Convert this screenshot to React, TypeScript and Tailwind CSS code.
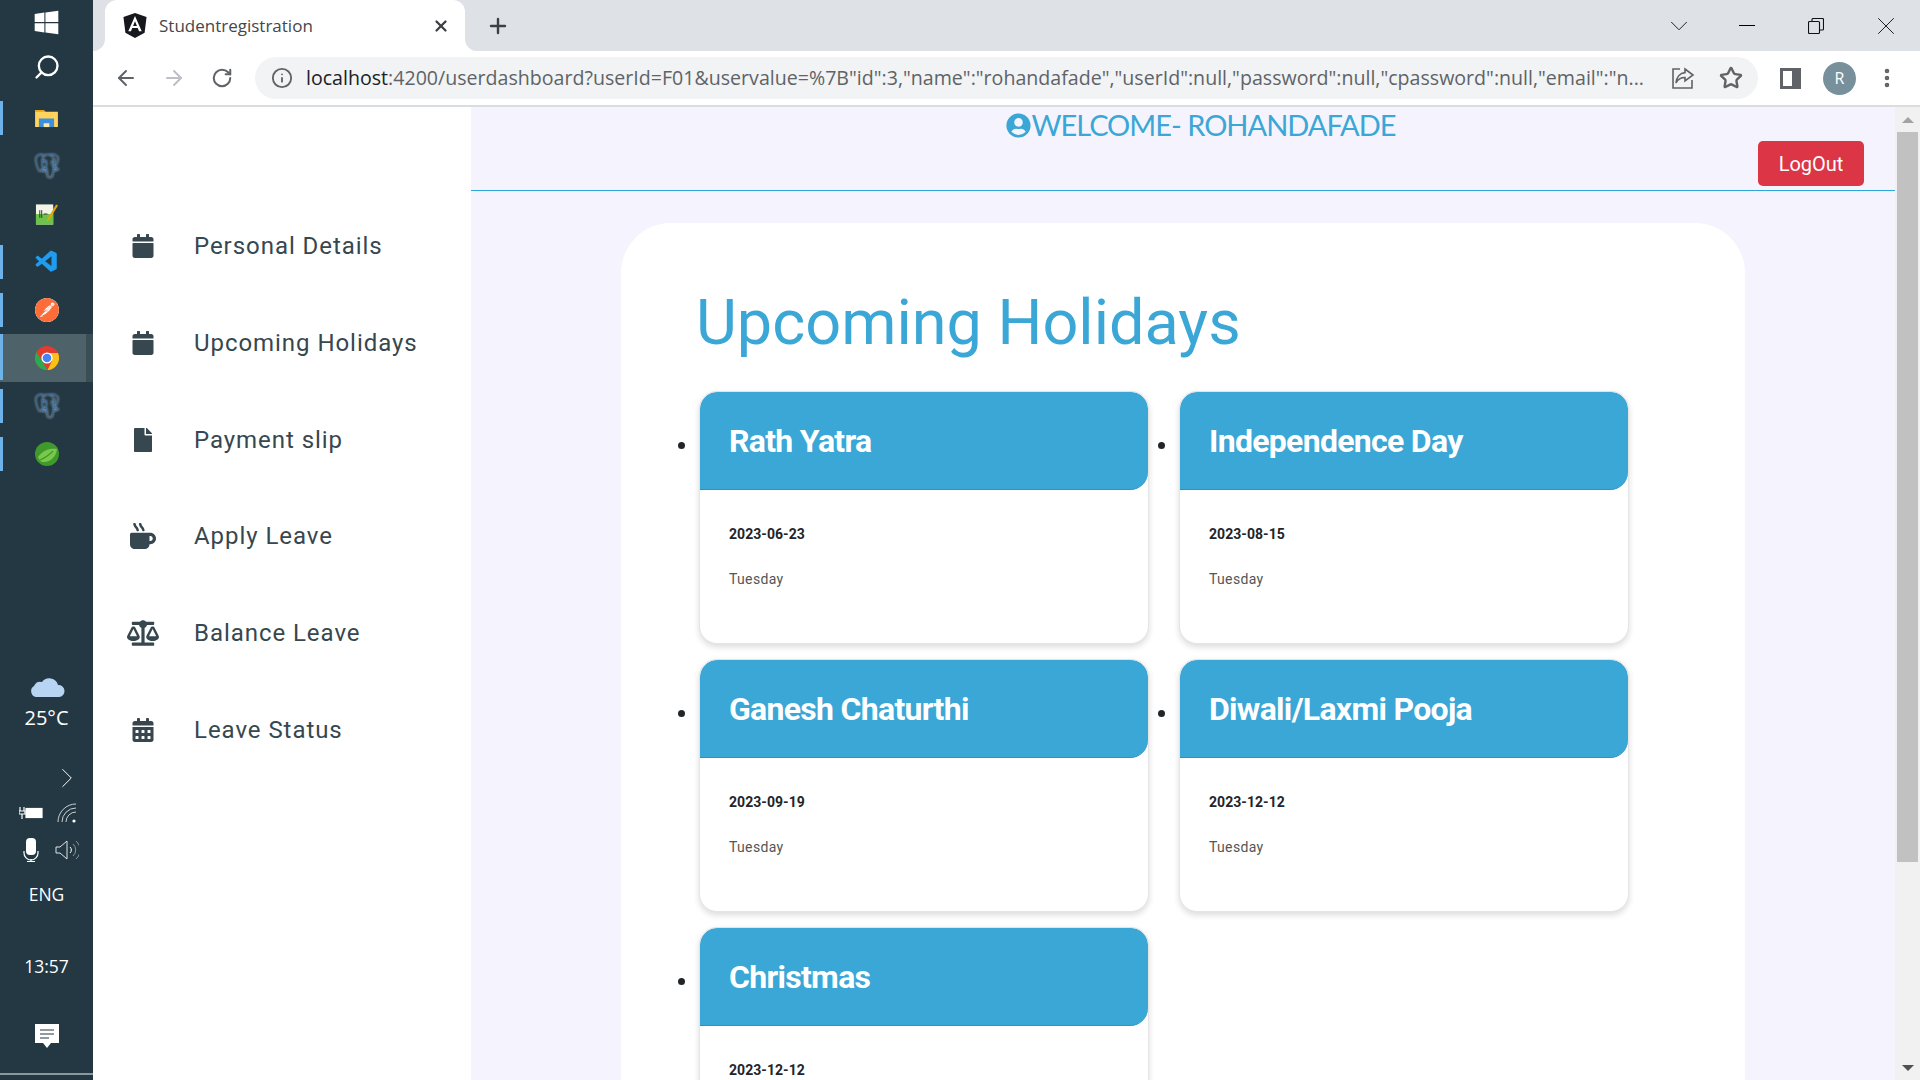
import React from 'react';
import { FaBalanceScale, FaCalendar, FaCalendarAlt, FaFile, FaMugHot, FaUserCircle, FaWindows } from 'react-icons/fa';
import { SiPostgresql, SiPostman } from 'react-icons/si';
import { VscVscode } from 'react-icons/vsc';
import { ArrowLeft, ArrowRight, ChevronDown, ChevronRight, Info, MoreVertical, Plus, RotateCw, Search, Star, X } from 'lucide-react';

const holidays = [
    { name: 'Rath Yatra', date: '2023-06-23', day: 'Tuesday' },
    { name: 'Independence Day', date: '2023-08-15', day: 'Tuesday' },
    { name: 'Ganesh Chaturthi', date: '2023-09-19', day: 'Tuesday' },
    { name: 'Diwali/Laxmi Pooja', date: '2023-12-12', day: 'Tuesday' },
    { name: 'Christmas', date: '2023-12-12', day: 'Tuesday' },
];

const menu = [
    { label: 'Personal Details', icon: <FaCalendar className="w-[24px] h-[24px]" /> },
    { label: 'Upcoming Holidays', icon: <FaCalendar className="w-[24px] h-[24px]" /> },
    { label: 'Payment slip', icon: <FaFile className="w-[24px] h-[24px]" /> },
    { label: 'Apply Leave', icon: <FaMugHot className="w-[26px] h-[26px]" /> },
    { label: 'Balance Leave', icon: <FaBalanceScale className="w-[32px] h-[32px]" /> },
    { label: 'Leave Status', icon: <FaCalendarAlt className="w-[24px] h-[24px]" /> },
];

function ChromeLogo() {
    return (
        <svg viewBox="0 0 24 24" className="w-[24px] h-[24px]">
            <circle cx="12" cy="12" r="12" fill="#e33b2e" />
            <path d="M1.6 6 L7 15 L12.5 24 A12 12 0 0 1 1.6 6Z" fill="#2da94f" />
            <path d="M12 7 H23 A12 12 0 0 1 12.5 24 L17 15 Z" fill="#fbc116" />
            <circle cx="12" cy="12" r="5.6" fill="#fff" />
            <circle cx="12" cy="12" r="4.3" fill="#4285f4" />
        </svg>
    );
}

function FolderIcon() {
    return (
        <svg viewBox="0 0 24 20" className="w-[23px] h-[19px]">
            <path d="M0 1 H9 L11 3 H24 V19 H0Z" fill="#ffd35c" />
            <path d="M0 1 H9 L11 3 H0Z" fill="#e8a317" />
            <rect x="4" y="10" width="16" height="9" fill="#3b8fdc" />
            <rect x="9" y="15" width="6" height="4" fill="#ffe9a8" />
        </svg>
    );
}

function NotepadIcon() {
    return (
        <svg viewBox="0 0 24 24" className="w-[23px] h-[24px]">
            <rect x="1" y="2" width="18" height="21" fill="#f2f4e8" />
            <rect x="1" y="12" width="18" height="11" fill="#6cc24a" />
            <path d="M5 8 V16 M7 8 V16 M9 12 H13" stroke="#333" strokeWidth="1" />
            <path d="M22 2 L13 17 L12 20 L15 18 L24 3Z" fill="#e5a50a" />
        </svg>
    );
}

function SpringLogo() {
    return (
        <svg viewBox="0 0 24 24" className="w-[24px] h-[24px]">
            <circle cx="12" cy="12" r="12" fill="#3f9a2b" />
            <path d="M3 15 C8 8 15 6 22 7 C21 15 15 21 7 20 C5 19 4 17 3 15Z" fill="#79c84b" />
            <path d="M5 18 C10 16 14 13 18 9" stroke="#3f9a2b" strokeWidth="1.2" fill="none" />
        </svg>
    );
}

function PgIcon() {
    return <SiPostgresql className="w-[24px] h-[24px] text-[#33679a] drop-shadow-[0_0_1px_#e4eef6]" />;
}

function TaskbarApp({ children, bar, active }: { children: React.ReactNode; bar?: boolean; active?: boolean }) {
    return (
        <div className={`relative h-[48px] flex items-center justify-center ${active ? 'bg-[#4e6269] border-r-[7px] border-[#3c4e55] pl-[7px]' : ''}`}>
            {bar && <div className={`absolute left-0 w-[3px] bg-[#6db3ea] ${active ? 'top-0 h-[46px]' : 'top-[7px] h-[34px]'}`} />}
            {children}
        </div>
    );
}

function Taskbar() {
    return (
        <aside className="w-[93px] h-full shrink-0 bg-[#233843] flex flex-col text-white font-['Open_Sans',sans-serif]">
            <div className="h-[44px] flex items-center justify-center">
                <FaWindows className="w-[27px] h-[27px]" />
            </div>
            <div className="h-[45px] flex items-center justify-center">
                <Search className="w-[28px] h-[28px] -scale-x-100" strokeWidth={2} />
            </div>
            <div className="mt-[5px]">
                <TaskbarApp bar><FolderIcon /></TaskbarApp>
                <TaskbarApp><PgIcon /></TaskbarApp>
                <TaskbarApp><NotepadIcon /></TaskbarApp>
                <TaskbarApp bar><VscVscode className="w-[26px] h-[26px] text-[#1f9cf0]" /></TaskbarApp>
                <TaskbarApp bar><SiPostman className="w-[24px] h-[24px] text-[#ff6c37] bg-white rounded-full" /></TaskbarApp>
                <TaskbarApp bar active><ChromeLogo /></TaskbarApp>
                <TaskbarApp bar><PgIcon /></TaskbarApp>
                <TaskbarApp bar><SpringLogo /></TaskbarApp>
            </div>
            <div className="mt-[196px] flex flex-col items-center">
                <svg viewBox="0 0 36 24" className="w-[36px] h-[24px]">
                    <path d="M7 23 A6 6 0 0 1 5 12 A7 7 0 0 1 13 8 A9 9 0 0 1 29 11 A6 6 0 0 1 30 23Z" fill="#b8d4f3" />
                </svg>
                <div className="text-[20px] leading-[24px] mt-[8px]">25°C</div>
            </div>
            <div className="mt-[31px] flex justify-end pr-[9px]">
                <ChevronRight className="w-[34px] h-[34px]" strokeWidth={0.7} />
            </div>
            <div className="mt-[4px] flex items-center justify-between pl-[19px] pr-[16px] h-[28px]">
                <svg viewBox="0 0 24 14" className="w-[24px] h-[14px]" fill="none" stroke="#fff" strokeWidth="1.2">
                    <path d="M1 1 V5 M5 1 V5 M0 5 H6 V8 H0Z M3 8 V13" />
                    <rect x="7" y="2.5" width="16" height="9" fill="#fff" />
                </svg>
                <svg viewBox="0 0 20 20" className="w-[20px] h-[20px]" fill="none" stroke="#c8d0d4" strokeWidth="1">
                    <path d="M1 19 A18 18 0 0 1 19 1 M5 19 A14 14 0 0 1 19 5 M9 19 A10 10 0 0 1 19 9" />
                    <circle cx="17" cy="18" r="1.6" fill="#fff" stroke="none" />
                </svg>
            </div>
            <div className="mt-[8px] flex items-center justify-between pl-[23px] pr-[14px] h-[30px]">
                <svg viewBox="0 0 16 24" className="w-[16px] h-[24px]">
                    <rect x="3" y="0" width="10" height="17" rx="4" fill="#fff" />
                    <path d="M1 13 V15 A6 6 0 0 0 15 15 V13 M8 21 V23 M4 23.5 H12" fill="none" stroke="#fff" strokeWidth="1.2" />
                </svg>
                <svg viewBox="0 0 24 20" className="w-[24px] h-[20px]" fill="none" stroke="#dfe4e6" strokeWidth="1">
                    <path d="M1 7 H5 L12 1 V19 L5 13 H1Z" />
                    <path d="M15 7 A4 4 0 0 1 15 13" stroke="#fff" />
                    <path d="M18 4 A8 8 0 0 1 18 16 M21 1 A12 12 0 0 1 21 19" stroke="#8a979c" />
                </svg>
            </div>
            <div className="mt-[17px] text-center text-[17.5px] leading-[24px]">ENG</div>
            <div className="mt-[48px] text-center text-[17.5px] leading-[24px]">13:57</div>
            <div className="mt-[46px] flex justify-center">
                <svg viewBox="0 0 24 24" className="w-[24px] h-[24px]">
                    <path d="M0 0 H24 V19 H16 L12 24 L8 19 H0Z" fill="#fff" />
                    <path d="M5 6 H19 M5 10 H19 M5 14 H14" stroke="#233843" strokeWidth="1.2" />
                </svg>
            </div>
            <div className="mt-auto mb-[5px] h-[2px] bg-[#8b979b]" />
        </aside>
    );
}

function BrowserBar() {
    return (
        <header className="shrink-0 font-['Open_Sans',sans-serif]">
            <div className="h-[51px] bg-[#dee1e6] flex items-end pl-[12px] text-[#202124]">
                <div className="relative w-[360px] h-[51px] bg-white rounded-t-[12px] flex items-center pl-[18px] pr-[15px]">
                    {/* flared tab corners */}
                    <div className="absolute left-[-12px] bottom-0 w-[12px] h-[12px] bg-white">
                        <div className="w-full h-full bg-[#dee1e6] rounded-br-[12px]" />
                    </div>
                    <div className="absolute right-[-12px] bottom-0 w-[12px] h-[12px] bg-white">
                        <div className="w-full h-full bg-[#dee1e6] rounded-bl-[12px]" />
                    </div>
                    <svg viewBox="0 0 24 26" className="w-[24px] h-[25px] shrink-0">
                        <path d="M12 0 L24 4.2 L22 20.5 L12 26 L2 20.5 L0 4.2Z" fill="#16181d" />
                        <path d="M12 3 L5 19 H7.8 L9.2 15.6 H14.8 L16.2 19 H19Z M12 8.6 L14 13.4 H10Z" fill="#fff" fillRule="evenodd" />
                    </svg>
                    <span className="ml-[12px] text-[17px] text-[#45474a] flex-1">Studentregistration</span>
                    <X className="w-[18px] h-[18px] text-[#3c4043]" strokeWidth={3} />
                </div>
                <div className="h-[51px] flex items-center ml-[21px]">
                    <Plus className="w-[24px] h-[24px] text-[#3c4043]" strokeWidth={2.4} />
                </div>
                <div className="ml-auto h-[51px] flex items-center">
                    <ChevronDown className="w-[30px] h-[30px] mr-[45px]" strokeWidth={0.8} />
                    <div className="w-[16px] h-px bg-black mr-[53px]" />
                    <svg viewBox="0 0 16 16" className="w-[16px] h-[16px] mr-[47px]" fill="none" stroke="#111" strokeWidth="1.1">
                        <rect x="0.5" y="3.5" width="11" height="12" rx="1" />
                        <path d="M4 3.5 V1.5 A1 1 0 0 1 5 0.5 H14.5 A1 1 0 0 1 15.5 1.5 V11 A1 1 0 0 1 14.5 12 H11.5" />
                    </svg>
                    <X className="w-[30px] h-[30px] mr-[19px]" strokeWidth={0.8} />
                </div>
            </div>
            <div className="h-[56px] bg-white border-b-2 border-[#dadce0] flex items-center text-[#5f6368]">
                <ArrowLeft className="w-[24px] h-[24px] ml-[21px]" strokeWidth={2} />
                <ArrowRight className="w-[24px] h-[24px] ml-[24px] text-[#bdc1c6]" strokeWidth={2} />
                <RotateCw className="w-[22px] h-[22px] ml-[25px]" strokeWidth={2.2} />
                <div className="w-[1503px] h-[42px] ml-[22px] rounded-full bg-[#f1f3f4] flex items-center shrink-0">
                    <Info className="w-[22px] h-[22px] ml-[16px] shrink-0" strokeWidth={2} />
                    <div className="ml-[13px] w-[1340px] shrink-0 text-[19.6px] whitespace-nowrap">
                        <span className="text-[#202124]">localhost</span>:4200/userdashboard?userId=F01&amp;uservalue=%7B"id":3,"name":"rohandafade","userId":null,"password":null,"cpassword":null,"email":"n...
                    </div>
                    <svg viewBox="0 0 24 24" className="w-[24px] h-[24px] ml-auto shrink-0" fill="none" stroke="#5f6368" strokeWidth="1.6">
                        <path d="M9 3 H2 V22 H21 V14" />
                        <path d="M14 3 L22 9 L14 15 V11.5 C10 11.5 7 13 5 17 C5.5 11 9 7 14 6.6Z" />
                    </svg>
                    <Star className="w-[24px] h-[24px] ml-[24px] mr-[15px] shrink-0" strokeWidth={2.4} />
                </div>
                <div className="w-[21px] h-[21px] ml-[22px] border-[3px] border-[#5f6368] border-r-[9px] shrink-0" />
                <div className="w-[33px] h-[33px] ml-[22px] rounded-full bg-[#78909c] text-white text-[16px] flex items-center justify-center shrink-0">R</div>
                <MoreVertical className="w-[24px] h-[24px] ml-[19px] shrink-0" strokeWidth={2.6} />
            </div>
        </header>
    );
}

function Sidebar() {
    return (
        <nav className="w-[378px] shrink-0 bg-white pt-[91px] text-[#37474f]">
            {menu.map((item) => (
                <div key={item.label} className="h-[96.7px] flex items-center">
                    <div className="w-[100px] mr-[1px] flex justify-center shrink-0">{item.icon}</div>
                    <span className="text-[24px] tracking-[0.95px]">{item.label}</span>
                </div>
            ))}
        </nav>
    );
}

function HolidayCard({ name, date, day }: { name: string; date: string; day: string }) {
    return (
        <li className="w-[480px] h-[268px] text-[#212529] text-[24px]">
            <div className="w-[450px] h-[253px] bg-white rounded-[18px] border border-[#e4e4e4] shadow-[0_3px_6px_rgba(0,0,0,0.14)] overflow-hidden">
                <div className="h-[98px] bg-[#3aa7d6] border-b border-[#2f93bd] rounded-t-[17px] rounded-br-[18px] pl-[29px] flex items-center">
                    <h3 className="text-[32px] font-bold text-white tracking-[-0.7px]">{name}</h3>
                </div>
                <p className="pl-[29px] mt-[34px] text-[14px] tracking-[0.05px] leading-[20px] font-bold">{date}</p>
                <p className="pl-[29px] mt-[25px] text-[14px] leading-[20px] tracking-[0.35px] text-[#555]">{day}</p>
            </div>
        </li>
    );
}

export default function App() {
    return (
        <div className="w-screen h-screen overflow-hidden flex font-['Roboto',sans-serif]">
            <Taskbar />
            <div className="flex-1 min-w-0 flex flex-col">
                <BrowserBar />
                <div className="flex-1 min-h-0 flex">
                    <Sidebar />
                    <main className="flex-1 min-w-0 bg-[#f5f4fe] overflow-hidden">
                        <div className="h-[84px] border-b border-[#2ea6d9]">
                            <div className="h-[34px] pt-[2px] flex items-center justify-center pl-[36px] text-[#3aa7d6]">
                                <FaUserCircle className="w-[25px] h-[25px] shrink-0" />
                                <span className="font-['Lato',sans-serif] text-[29px] tracking-[-1px]">WELCOME- ROHANDAFADE</span>
                            </div>
                            <div className="flex justify-end pr-[31px]">
                                <button className="w-[106px] h-[45px] bg-[#dc3545] rounded-[5px] text-white text-[20px]">LogOut</button>
                            </div>
                        </div>
                        <section className="ml-[150px] mt-[32px] w-[1124px] h-[1000px] bg-white rounded-t-[50px] pl-[75px] pt-[62px]">
                            <h1 className="text-[63px] leading-[76px] text-[#3aa7d6]">Upcoming Holidays</h1>
                            <ul className="list-disc ml-[3px] mt-[30px] grid grid-cols-[480px_480px]">
                                {holidays.map((h) => (
                                    <HolidayCard key={h.name} name={h.name} date={h.date} day={h.day} />
                                ))}
                            </ul>
                        </section>
                    </main>
                    <div className="w-[25px] shrink-0 bg-[#f1f1f1] flex flex-col items-center">
                        <div className="h-[25px] flex items-center justify-center">
                            <div className="w-0 h-0 border-x-[6px] border-x-transparent border-b-[6px] border-b-[#a3a3a3]" />
                        </div>
                        <div className="w-[21px] h-[730px] bg-[#c1c1c1]" />
                        <div className="mt-auto h-[25px] flex items-center justify-center">
                            <div className="w-0 h-0 border-x-[6px] border-x-transparent border-t-[6px] border-t-[#505050]" />
                        </div>
                    </div>
                </div>
            </div>
        </div>
    );
}
